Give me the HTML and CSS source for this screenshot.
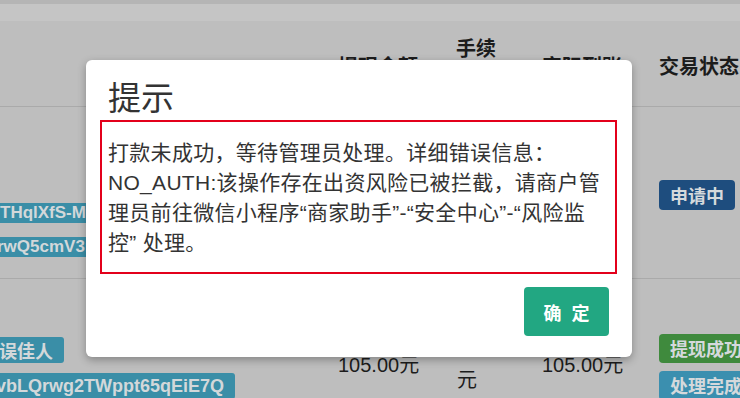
FILE: index.html
```html
<!DOCTYPE html>
<html lang="zh-CN">
<head>
<meta charset="utf-8">
<title>提示</title>
<link rel="stylesheet" href="styles.css">
</head>
<body>
<div class="page">
  <div class="topbar"></div>
  <div class="subbar"></div>
  <div class="table">
    <div class="row thead">
      <div class="cell c1"></div>
      <div class="cell c2 th">提现金额</div>
      <div class="cell c3 th"><span class="wrap2">手续费</span></div>
      <div class="cell c4 th">实际到账</div>
      <div class="cell c5 th">交易状态</div>
    </div>
    <div class="row r1">
      <div class="cell c1 stack stack-r1">
        <span class="tag tag-sm tag-a">THqlXfS-Mw2k</span>
        <span class="tag tag-sm tag-b">rwQ5cmV3nQ</span>
      </div>
      <div class="cell c2"></div>
      <div class="cell c3"></div>
      <div class="cell c4"></div>
      <div class="cell c5 stack stack-r1s">
        <span class="badge badge-blue">申请中</span>
      </div>
    </div>
    <div class="row r2">
      <div class="cell c1 stack stack-r2">
        <span class="tag tag-lg tag-c">误佳人</span>
        <span class="tag tag-lg tag-d">vbLQrwg2TWppt65qEiE7Q</span>
      </div>
      <div class="cell c2 money">105.00元</div>
      <div class="cell c3 fee">元</div>
      <div class="cell c4 money">105.00元</div>
      <div class="cell c5 stack stack-r2s">
        <span class="badge badge-green">提现成功</span>
        <span class="badge badge-info">处理完成</span>
      </div>
    </div>
  </div>
</div>

<div class="modal">
  <h1 class="modal-title">提示</h1>
  <div class="modal-body">打款未成功，等待管理员处理。详细错误信息：NO_AUTH:该操作存在出资风险已被拦截，请商户管理员前往微信小程序“商家助手”-“安全中心”-“风险监控” 处理。</div>
  <div class="modal-footer">
    <button class="btn-ok">确 定</button>
  </div>
</div>
</body>
</html>
```
FILE: styles.css
```css
html, body {
  margin: 0;
  padding: 0;
  width: 740px;
  height: 398px;
  overflow: hidden;
  background: #bebebe;
}

body {
  font-family: "Noto Sans CJK SC", "Liberation Sans", sans-serif;
  color: #1c1c1c;
  position: relative;
}

.page {
  width: 740px;
}

.topbar {
  height: 4px;
  background: #b5b5b5;
}

.subbar {
  height: 17px;
  background: #c5c5c5;
}

.row {
  display: grid;
  grid-template-columns: 330px 117px 85px 118px 90px;
  border-bottom: 1px solid #aaaaaa;
}

.thead {
  height: 85px;
}

.r1 {
  height: 171px;
}

.r2 {
  height: 120px;
  border-bottom: none;
}

.cell {
  overflow: hidden;
  white-space: nowrap;
}

.c2 { padding-left: 8px; }
.c3 { padding-left: 9px; }
.c4 { padding-left: 10px; }
.c5 { padding-left: 9px; }

.th {
  display: flex;
  align-items: center;
  padding-top: 3px;
  font-size: 20px;
  font-weight: bold;
  line-height: 25px;
}

.wrap2 {
  white-space: normal;
  width: 42px;
  margin-top: -10px;
}

.stack {
  display: flex;
  flex-direction: column;
  align-items: flex-start;
}

.stack-r1 { padding-top: 96px; gap: 14px; }
.stack-r1s { padding-top: 73px; }
.stack-r2 { padding-top: 58px; gap: 10px; }
.stack-r2s { padding-top: 55px; gap: 8px; }

.tag {
  font-family: "Liberation Sans", "Noto Sans CJK SC", sans-serif;
  font-weight: bold;
  background: #3a8ea7;
  color: #d3d8da;
  border-radius: 3px;
  white-space: nowrap;
}

.tag-sm {
  height: 20px;
  line-height: 20px;
  font-size: 17px;
}

.tag-lg {
  height: 26px;
  line-height: 26px;
  font-size: 18px;
  padding-right: 11px;
}

.tag-a { margin-left: -6px; padding-left: 6px; padding-right: 10px; }
.tag-b { margin-left: -9px; padding-left: 6px; padding-right: 10px; }
.tag-c { margin-left: -8px; padding-left: 7px; padding-right: 11px; }
.tag-d { margin-left: -11px; padding-left: 7px; padding-right: 11px; }

.tag-c {
  font-family: "Noto Sans CJK SC", sans-serif;
}

.badge {
  display: inline-block;
  font-weight: bold;
  font-size: 18px;
  color: #d5d9dc;
  border-radius: 4px;
  padding: 0 11px;
  white-space: nowrap;
}

.badge-blue {
  background: #1e4d7e;
  height: 30px;
  line-height: 30px;
}

.badge-green {
  background: #3f8a3d;
  height: 29px;
  line-height: 29px;
}

.badge-info {
  background: #3b8faf;
  height: 29px;
  line-height: 29px;
}

.money {
  font-family: "Liberation Sans", "Noto Sans CJK SC", sans-serif;
  font-size: 20px;
  line-height: 24px;
  padding-top: 74px;
}

.fee {
  font-size: 20px;
  line-height: 24px;
  padding-top: 88px;
  padding-left: 10px;
}

/* modal overlay */
.modal {
  position: absolute;
  left: 86px;
  top: 60px;
  width: 546px;
  box-sizing: border-box;
  background: #ffffff;
  border-radius: 6px;
  box-shadow: 0 3px 9px rgba(0, 0, 0, 0.3);
  padding: 16px 15px 21px 14px;
  color: #333333;
}

.modal-title {
  margin: 0;
  padding-left: 8px;
  font-size: 33px;
  line-height: 40px;
  font-weight: normal;
  color: #333333;
}

.modal-body {
  margin-top: 4px;
  border: 2px solid #e3001b;
  padding: 16px 4px 14px 6px;
  font-family: "Liberation Sans", "Noto Sans CJK SC", sans-serif;
  font-size: 21px;
  letter-spacing: 0.3px;
  line-height: 30px;
  color: #333333;
}

.modal-footer {
  display: flex;
  justify-content: flex-end;
  margin-top: 13px;
  padding-right: 8px;
}

.btn-ok {
  width: 85px;
  height: 49px;
  border: none;
  border-radius: 4px;
  background: #22a782;
  color: #ffffff;
  font-family: "Noto Sans CJK SC", sans-serif;
  font-size: 18px;
  font-weight: bold;
  letter-spacing: 3px;
  padding: 0 0 0 3px;
}
```
